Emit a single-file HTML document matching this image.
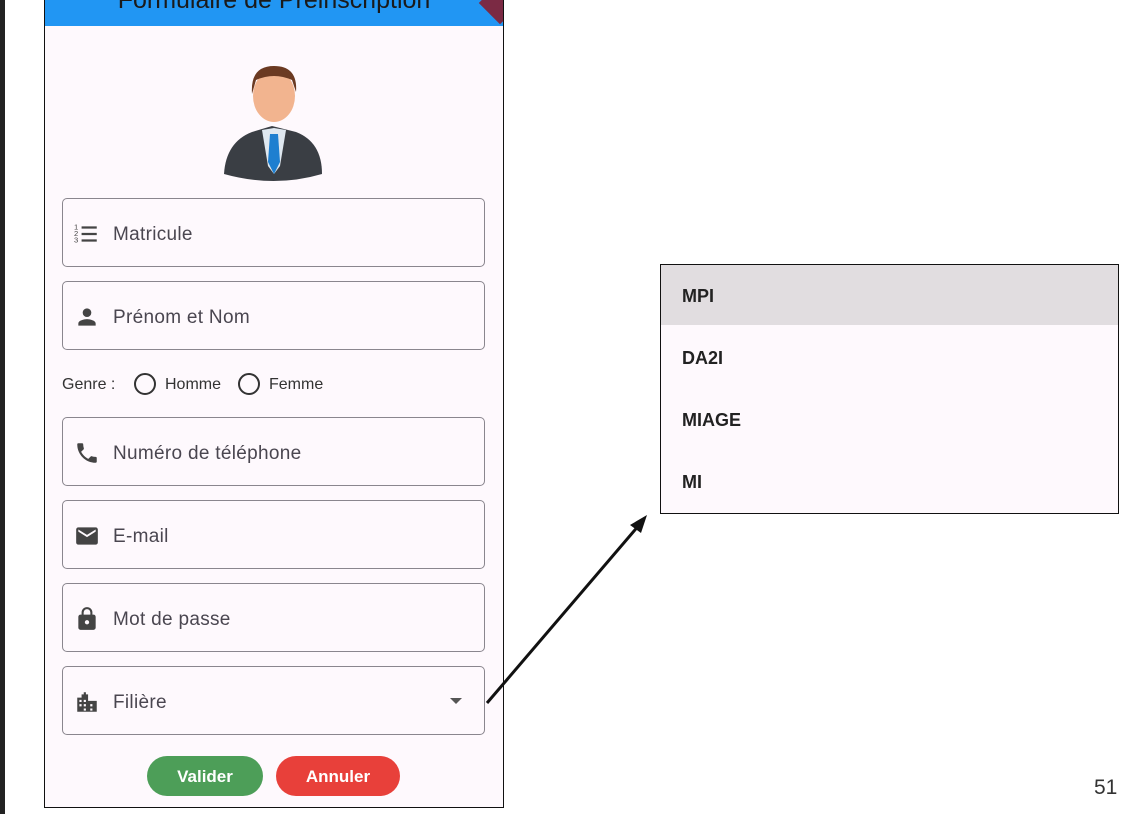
<!DOCTYPE html>
<html><head><meta charset="utf-8"><style>
body{margin:0;width:1124px;height:814px;background:#fff;position:relative;overflow:hidden;font-family:"Liberation Sans",sans-serif}
.a{position:absolute}
.phone{left:44px;top:-2px;width:458px;height:808px;border:1.5px solid #111;background:#fef9fd}
.bar{left:45px;top:0;width:458px;height:26px;background:#2196f3;overflow:hidden}
.f{position:absolute;left:62px;width:421px;height:67px;border:1.5px solid #8a868e;border-radius:5px;background:#fef9fd}
.f span{position:absolute;left:50px;top:25px;font-size:19px;color:#4a4650;letter-spacing:.3px}
.f svg{position:absolute;left:11px;top:22px}
.btn{position:absolute;top:756px;height:40px;border-radius:20px;color:#fff;font-weight:bold;font-size:17px;text-align:center;line-height:41px}
.it{position:absolute;left:682px;font-size:18px;color:#222;font-weight:bold}
</style></head><body>
<div class="a" style="left:0;top:0;width:5px;height:814px;background:#222"></div>
<div class="a phone"></div>
<div class="a bar"><div style="position:absolute;left:0;width:458px;top:-14px;text-align:center;font-size:25px;color:#1a1a1a">Formulaire de Préinscription</div>
<div style="position:absolute;right:-12px;top:-12px;width:30px;height:30px;background:#7b2a44;transform:rotate(45deg)"></div></div>
<svg class="a" style="left:222px;top:62px" width="104" height="122" viewBox="0 0 104 122">
<path d="M2 112 Q4 80 30 70 L50 64 L74 70 Q100 80 100 112 Q52 126 2 112Z" fill="#3a3e44"/>
<path d="M40 68 L52 66 L64 68 L58 104 L52 112 L46 104Z" fill="#dfe8f0"/>
<path d="M48 72 L56 72 L58 100 L52 112 L46 100Z" fill="#1e7fd0"/>
<ellipse cx="52" cy="34" rx="21" ry="26" fill="#f2b48f"/>
<path d="M30 32 Q28 4 52 4 Q76 4 74 30 L70 18 Q52 10 34 18Z" fill="#6b3a22"/>
</svg>
<div class="f" style="top:198px"><svg width="26" height="26" viewBox="0 0 24 24" fill="#444"><path d="M7 5h14v2H7zM7 11h14v2H7zM7 17h14v2H7z"/><text x="0" y="8" font-size="7">1</text><text x="0" y="14" font-size="7">2</text><text x="0" y="20" font-size="7">3</text></svg><span>Matricule</span></div>
<div class="f" style="top:281px"><svg width="26" height="26" viewBox="0 0 24 24" fill="#444"><path d="M12 12a4 4 0 1 0 0-8 4 4 0 0 0 0 8zm0 2c-2.7 0-8 1.3-8 4v2h16v-2c0-2.7-5.3-4-8-4z"/></svg><span>Prénom et Nom</span></div>
<div class="a" style="left:62px;top:376px;font-size:16px;color:#333">Genre :</div>
<div class="a" style="left:134px;top:373px;width:18px;height:18px;border:2px solid #333;border-radius:50%"></div>
<div class="a" style="left:165px;top:376px;font-size:16px;color:#333">Homme</div>
<div class="a" style="left:238px;top:373px;width:18px;height:18px;border:2px solid #333;border-radius:50%"></div>
<div class="a" style="left:269px;top:376px;font-size:16px;color:#333">Femme</div>
<div class="f" style="top:417px"><svg width="26" height="26" viewBox="0 0 24 24" fill="#444"><path d="M6.6 10.8c1.4 2.8 3.8 5.1 6.6 6.6l2.2-2.2c.3-.3.7-.4 1-.2 1.1.4 2.3.6 3.6.6.6 0 1 .4 1 1V20c0 .6-.4 1-1 1C10.6 21 3 13.4 3 4c0-.6.4-1 1-1h3.5c.6 0 1 .4 1 1 0 1.3.2 2.5.6 3.6.1.3 0 .7-.2 1z"/></svg><span>Numéro de téléphone</span></div>
<div class="f" style="top:500px"><svg width="26" height="26" viewBox="0 0 24 24" fill="#444"><path d="M20 4H4c-1.1 0-2 .9-2 2v12c0 1.1.9 2 2 2h16c1.1 0 2-.9 2-2V6c0-1.1-.9-2-2-2zm0 4l-8 5-8-5V6l8 5 8-5v2z"/></svg><span>E-mail</span></div>
<div class="f" style="top:583px"><svg width="26" height="26" viewBox="0 0 24 24" fill="#444"><path d="M18 8h-1V6A5 5 0 0 0 7 6v2H6c-1.1 0-2 .9-2 2v10c0 1.1.9 2 2 2h12c1.1 0 2-.9 2-2V10c0-1.1-.9-2-2-2zm-6 9a2 2 0 1 1 0-4 2 2 0 0 1 0 4zm3.1-9H8.9V6a3.1 3.1 0 0 1 6.2 0v2z"/></svg><span>Mot de passe</span></div>
<div class="f" style="top:666px"><svg width="26" height="26" viewBox="0 0 24 24" fill="#444"><path d="M3 21V8h4V5h2V3h2v2h2v6h8v10zM5 10v2h2v-2zm4 0v2h2v-2zm-4 4v2h2v-2zm4 0v2h2v-2zm6 0v2h2v-2zm0 4v2h2v-2zm-6 0v2h2v-2z"/></svg><span>Filière</span>
<div style="position:absolute;right:22px;top:31px;width:0;height:0;border-left:6px solid transparent;border-right:6px solid transparent;border-top:6px solid #555"></div></div>
<div class="btn" style="left:147px;width:116px;background:#4d9e58">Valider</div>
<div class="btn" style="left:276px;width:124px;background:#e8403a">Annuler</div>
<div class="a" style="left:660px;top:264px;width:457px;height:248px;border:1.5px solid #111;background:#fef9fd"></div>
<div class="a" style="left:661px;top:265px;width:457px;height:60px;background:#e1dde0"></div>
<div class="it" style="top:286px">MPI</div>
<div class="it" style="top:348px">DA2I</div>
<div class="it" style="top:410px">MIAGE</div>
<div class="it" style="top:472px">MI</div>
<svg class="a" style="left:0;top:0" width="1124" height="814"><line x1="487" y1="703" x2="640" y2="524" stroke="#111" stroke-width="3"/><polygon points="647,515 630,525 641,533" fill="#111"/></svg>
<div class="a" style="left:1094px;top:776px;font-size:21px;color:#333">51</div>
</body></html>
